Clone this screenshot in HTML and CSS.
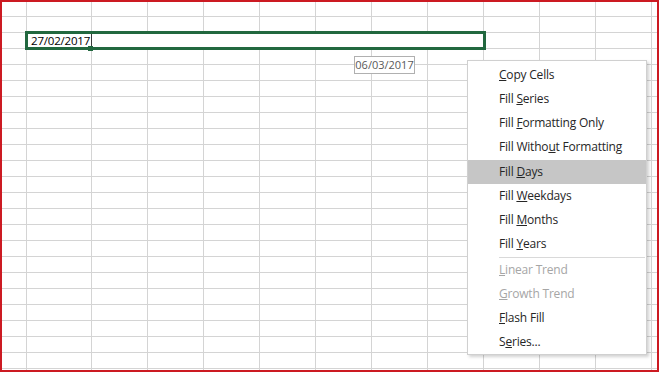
FILE: index.html
```html
<!DOCTYPE html>
<html lang="en">
<head>
  <meta charset="UTF-8">
  <title>Auto Fill Options</title>
  <link rel="stylesheet" href="styles.css">
</head>
<body>
  <div class="frame">
    <div class="sheet">
      <div class="col col-a"></div>
      <div class="col col-b"></div>
      <div class="col"></div>
      <div class="col"></div>
      <div class="col"></div>
      <div class="col"></div>
      <div class="col"></div>
      <div class="col"></div>
      <div class="col"></div>
      <div class="col"></div>
      <div class="col"></div>
      <div class="col"></div>
    </div>

    <!-- range being dragged -->
    <div class="selection">
      <span class="cell-text">27/02/2017</span>
      <span class="handle"></span>
    </div>

    <div class="drag-tip">06/03/2017</div>

    <ul class="fill-menu">
      <li class="menu-item"><u>C</u>opy Cells</li>
      <li class="menu-item">Fill <u>S</u>eries</li>
      <li class="menu-item">Fill <u>F</u>ormatting Only</li>
      <li class="menu-item">Fill Witho<u>u</u>t Formatting</li>
      <li class="menu-item active">Fill <u>D</u>ays</li>
      <li class="menu-item">Fill <u>W</u>eekdays</li>
      <li class="menu-item">Fill <u>M</u>onths</li>
      <li class="menu-item">Fill <u>Y</u>ears</li>
      <li class="menu-sep"></li>
      <li class="menu-item disabled"><u>L</u>inear Trend</li>
      <li class="menu-item disabled"><u>G</u>rowth Trend</li>
      <li class="menu-item"><u>F</u>lash Fill</li>
      <li class="menu-item">S<u>e</u>ries...</li>
    </ul>
  </div>
</body>
</html>
```

FILE: styles.css
```css
body {
  margin: 0;
  font-family: "Open Sans", "Liberation Sans", sans-serif;
  background-color: #fff;
}
.frame {
  position: relative;
  width: 659px;
  height: 372px;
  box-sizing: border-box;
  border: 2px solid #cc1a22;
  overflow: hidden;
}
.sheet {
  display: flex;
  height: 100%;
  background-image: linear-gradient(to bottom, #d4d4d4 1px, transparent 1px);
  background-size: 100% 16px;
  background-position: 0 14px;
}
.col {
  flex: none;
  width: 55px;
  border-right: 1px solid #d4d4d4;
}
.col-a {
  width: 24px;
}
.col-b {
  width: 64px;
}
.selection {
  position: absolute;
  left: 23px;
  top: 29px;
  width: 461px;
  height: 19px;
  box-sizing: border-box;
  border: 3px solid #22683f;
  background-color: #fff;
}
.selection::before {
  content: "";
  position: absolute;
  left: 63px;
  top: 0;
  width: 1px;
  height: 13px;
  background-color: #3a3a3a;
}
.cell-text {
  display: block;
  padding-left: 3px;
  font-size: 11.5px;
  line-height: 13px;
  letter-spacing: -0.2px;
  color: #000;
}
.handle {
  position: absolute;
  left: 60px;
  top: 12px;
  width: 5px;
  height: 5px;
  background-color: #22683f;
}
.drag-tip {
  position: absolute;
  left: 352px;
  top: 54px;
  width: 61px;
  height: 18px;
  box-sizing: border-box;
  border: 1px solid #b0b0b0;
  background-color: #fff;
  font-size: 11px;
  line-height: 16px;
  text-align: center;
  color: #595959;
}
.fill-menu {
  position: absolute;
  left: 465px;
  top: 58px;
  width: 180px;
  margin: 0;
  padding: 2px 0 0;
  list-style: none;
  box-sizing: border-box;
  border: 1px solid #d0d0d0;
  background-color: #fff;
  box-shadow: 2px 2px 3px rgba(0, 0, 0, 0.18);
}
.menu-item {
  height: 24px;
  padding-left: 31px;
  font-size: 12px;
  line-height: 24px;
  letter-spacing: -0.2px;
  color: #262626;
  white-space: nowrap;
}
.menu-item.active {
  margin-top: 1px;
  background-color: #c6c6c6;
}
.menu-item.disabled {
  color: #a6a6a6;
}
.menu-sep {
  height: 1px;
  margin: 1px 1px 0 31px;
  background-color: #d9d9d9;
}
```
